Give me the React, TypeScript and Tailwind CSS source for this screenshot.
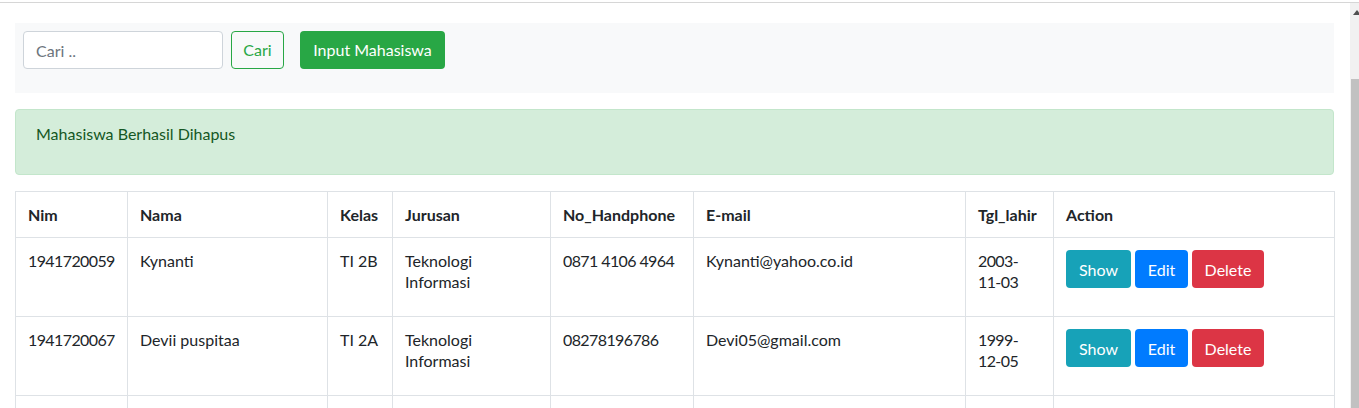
import React from "react";

const rows = [
  {
    nim: "1941720059",
    nama: "Kynanti",
    kelas: "TI 2B",
    jurusan: ["Teknologi", "Informasi"],
    hp: "0871 4106 4964",
    email: "Kynanti@yahoo.co.id",
    tgl: ["2003-", "11-03"],
  },
  {
    nim: "1941720067",
    nama: "Devii puspitaa",
    kelas: "TI 2A",
    jurusan: ["Teknologi", "Informasi"],
    hp: "08278196786",
    email: "Devi05@gmail.com",
    tgl: ["1999-", "12-05"],
  },
];

const th = "border border-[#dee2e6] px-3 py-3 text-left font-bold align-top";
const td = "border border-[#dee2e6] px-3 py-3 align-top";
const num = " whitespace-nowrap tracking-[-0.6px]";

export default function App() {
  return (
    <div
      className="w-[1359px] h-[408px] overflow-hidden bg-white flex flex-col text-[#212529] text-[16px]"
      style={{ fontFamily: "Lato, 'Noto Sans', sans-serif" }}
    >
      <div className="h-[2px] bg-white" />
      <div className="h-px bg-[#d6d6d6]" />
      <div className="flex flex-1 min-h-0">
        <main className="w-[1350px] pl-[15px] pr-[16px] pt-[20px]">
          <nav className="bg-[#f8f9fa] p-2">
            <form className="flex items-center mb-4" onSubmit={(e) => e.preventDefault()}>
              <input
                className="w-[200px] h-[38px] px-3 border border-[#ced4da] rounded bg-white leading-6 placeholder:text-[#6c757d] outline-none"
                placeholder="Cari .."
              />
              <button
                type="button"
                className="ml-2 w-[53px] h-[38px] border border-[#28a745] rounded text-[#28a745] bg-transparent flex items-center justify-center"
              >
                Cari
              </button>
              <button
                type="button"
                className="ml-4 w-[145px] h-[38px] rounded bg-[#28a745] text-white flex items-center justify-center"
              >
                Input Mahasiswa
              </button>
            </form>
          </nav>

          <div className="mt-4 px-5 py-3 border border-[#c3e6cb] bg-[#d4edda] text-[#155724] rounded">
            <p className="mb-4 leading-6">Mahasiswa Berhasil Dihapus</p>
          </div>

          <table className="mt-4 w-[1319px] table-fixed border-collapse leading-[21px]">
            <colgroup>
              <col className="w-[112px]" />
              <col className="w-[200px]" />
              <col className="w-[65px]" />
              <col className="w-[158px]" />
              <col className="w-[143px]" />
              <col className="w-[272px]" />
              <col className="w-[88px]" />
              <col className="w-[281px]" />
            </colgroup>
            <thead>
              <tr>
                <th className={th}>Nim</th>
                <th className={th}>Nama</th>
                <th className={th}>Kelas</th>
                <th className={th}>Jurusan</th>
                <th className={th}>No_Handphone</th>
                <th className={th}>E-mail</th>
                <th className={th}>Tgl_lahir</th>
                <th className={th}>Action</th>
              </tr>
            </thead>
            <tbody>
              {rows.map((r) => (
                <tr key={r.nim}>
                  <td className={td + num}>{r.nim}</td>
                  <td className={td}>{r.nama}</td>
                  <td className={td}>{r.kelas}</td>
                  <td className={td}>
                    {r.jurusan[0]}
                    <br />
                    {r.jurusan[1]}
                  </td>
                  <td className={td + num}>{r.hp}</td>
                  <td className={td}>{r.email}</td>
                  <td className={td + num}>
                    {r.tgl[0]}
                    <br />
                    {r.tgl[1]}
                  </td>
                  <td className={td}>
                    <div className="flex gap-1 mb-4">
                      <button className="w-[65px] h-[38px] rounded bg-[#17a2b8] text-white flex items-center justify-center">
                        Show
                      </button>
                      <button className="w-[53px] h-[38px] rounded bg-[#007bff] text-white flex items-center justify-center">
                        Edit
                      </button>
                      <button className="w-[72px] h-[38px] rounded bg-[#dc3545] text-white flex items-center justify-center">
                        Delete
                      </button>
                    </div>
                  </td>
                </tr>
              ))}
              <tr>
                <td className={td + " h-[79px]"}></td>
                <td className={td}></td>
                <td className={td}></td>
                <td className={td}></td>
                <td className={td}></td>
                <td className={td}></td>
                <td className={td}></td>
                <td className={td}></td>
              </tr>
            </tbody>
          </table>
        </main>
        <div className="w-[9px] bg-[#f1f1f1] flex flex-col">
          <div className="h-[76px] pt-[7px] pl-[3px]">
            <svg width="8" height="5" viewBox="0 0 8 5">
              <polygon points="0,5 4,0 8,5" fill="#505050" />
            </svg>
          </div>
          <div className="flex-1 ml-px bg-[#c1c1c1]" />
        </div>
      </div>
    </div>
  );
}
